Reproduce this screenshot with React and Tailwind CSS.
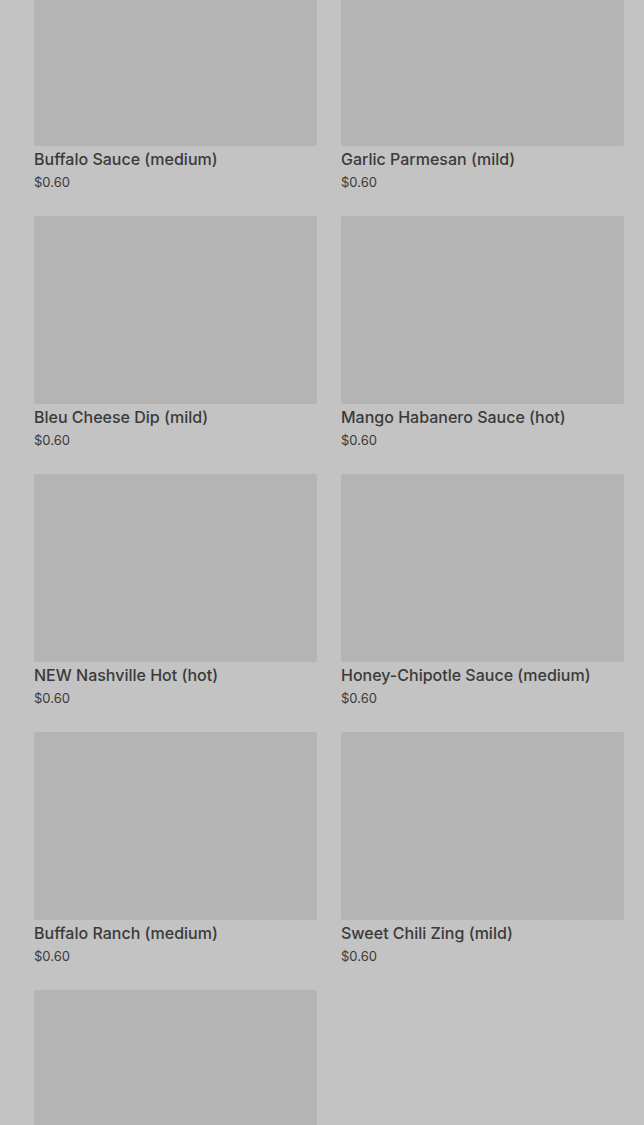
import React from "react";

const sauces = [
  { name: "Buffalo Sauce (medium)", price: "$0.60" },
  { name: "Garlic Parmesan (mild)", price: "$0.60" },
  { name: "Bleu Cheese Dip (mild)", price: "$0.60" },
  { name: "Mango Habanero Sauce (hot)", price: "$0.60" },
  { name: "NEW Nashville Hot (hot)", price: "$0.60" },
  { name: "Honey-Chipotle Sauce (medium)", price: "$0.60" },
  { name: "Buffalo Ranch (medium)", price: "$0.60" },
  { name: "Sweet Chili Zing (mild)", price: "$0.60" },
  { name: "", price: "" },
];

const App = () => {
  return (
    <div
      className="h-[1125px] w-[644px] overflow-hidden bg-[#c3c3c3] pl-[34px] pr-[20px]"
      style={{ fontFamily: "Inter, 'Noto Sans', sans-serif" }}
    >
      <div className="-mt-[42px] grid grid-cols-2 gap-x-[24px] gap-y-[24px]">
        {sauces.map((item, i) => (
          <div key={i} className="flex flex-col">
            <div className="h-[188px] rounded-[2px] bg-[#b4b4b4]" />
            <p className="mt-px text-[16px] font-medium leading-6 text-[#3a3a3a]">
              {item.name}
            </p>
            <p className="mt-px text-[13px] leading-5 text-[#3a3a3a]">{item.price}</p>
          </div>
        ))}
      </div>
    </div>
  );
};

export default App;
